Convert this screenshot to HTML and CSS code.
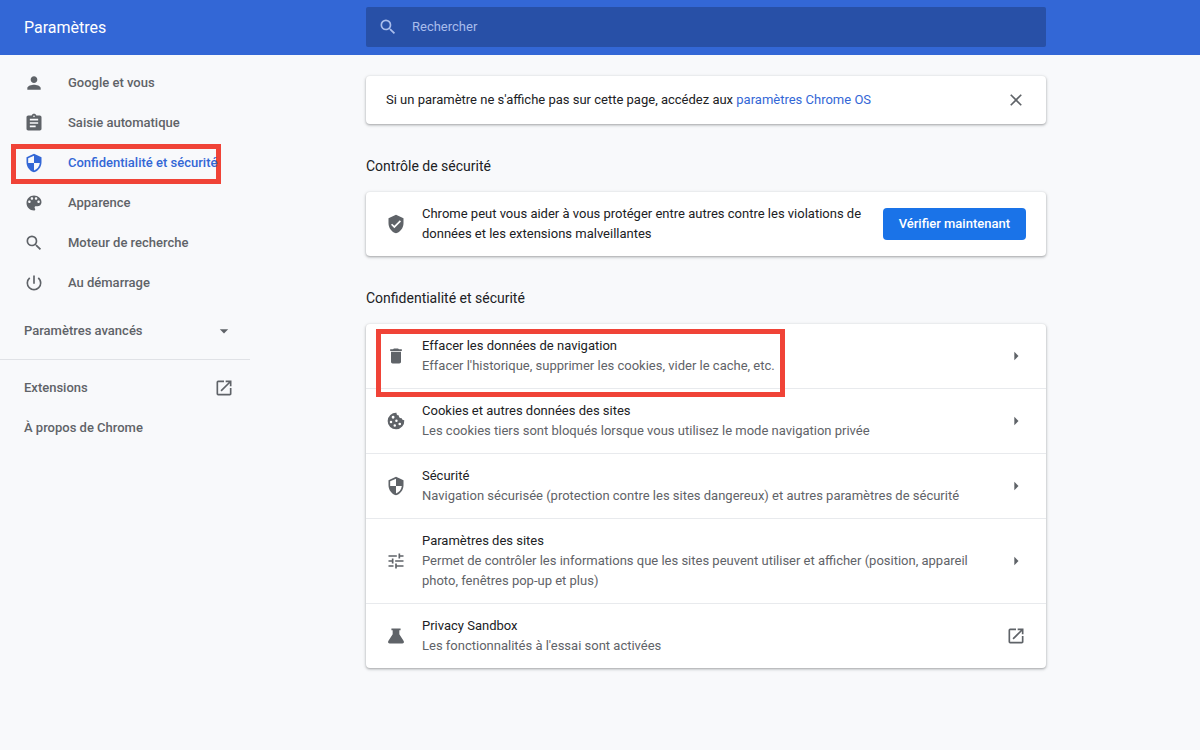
FILE: index.html
```html
<!DOCTYPE html>
<html lang="fr">
<head>
<meta charset="utf-8">
<meta name="viewport" content="width=device-width, initial-scale=1">
<title>Paramètres</title>
<link rel="stylesheet" href="styles.css">
</head>
<body>
<svg class="sprite" aria-hidden="true">
  <symbol id="search" viewBox="0 0 24 24"><path d="M15.5 14h-.79l-.28-.27A6.471 6.471 0 0 0 16 9.500 6.500 6.500 0 1 0 9.500 16c1.610 0 3.090-.59 4.230-1.570l.27.28v.79l5 4.990L20.490 19l-4.990-5zm-6 0C7.010 14 5 11.990 5 9.500S7.010 5 9.500 5 14 7.010 14 9.500 11.990 14 9.500 14z"/></symbol>
  <symbol id="person" viewBox="0 0 24 24"><path d="M12 12c2.210 0 4-1.790 4-4s-1.790-4-4-4-4 1.790-4 4 1.790 4 4 4zm0 2c-2.670 0-8 1.340-8 4v2h16v-2c0-2.660-5.330-4-8-4z"/></symbol>
  <symbol id="clipboard" viewBox="0 0 24 24"><path d="M19 3h-4.180C14.400 1.840 13.300 1 12 1s-2.400.84-2.820 2H5c-1.100 0-2 .9-2 2v14c0 1.100.9 2 2 2h14c1.100 0 2-.9 2-2V5c0-1.100-.9-2-2-2zm-7 0c.55 0 1 .45 1 1s-.45 1-1 1-1-.45-1-1 .45-1 1-1zm2 14H7v-2h7v2zm3-4H7v-2h10v2zm0-4H7V7h10v2z"/></symbol>
  <symbol id="shield" viewBox="0 0 24 24"><path d="M12 1L3 5v6c0 5.550 3.840 10.740 9 12 5.160-1.260 9-6.450 9-12V5l-9-4zm0 10.990h7c-.53 4.120-3.280 7.790-7 8.940V12H5V6.300l7-3.110v8.800z"/></symbol>
  <symbol id="shield-check" viewBox="0 0 24 24"><path d="M12 1L3 5v6c0 5.550 3.840 10.740 9 12 5.160-1.260 9-6.450 9-12V5l-9-4zm-2 16l-4-4 1.410-1.410L10 14.170l6.590-6.590L18 9l-8 8z"/></symbol>
  <symbol id="palette" viewBox="0 0 24 24"><path d="M12 3c-4.970 0-9 4.030-9 9s4.030 9 9 9c.83 0 1.500-.67 1.500-1.500 0-.39-.15-.74-.39-1.010-.23-.26-.38-.61-.38-.99 0-.83.67-1.500 1.500-1.500H16c2.760 0 5-2.240 5-5 0-4.420-4.030-8-9-8zm-5.500 9c-.83 0-1.500-.67-1.500-1.500S5.670 9 6.500 9 8 9.670 8 10.500 7.330 12 6.500 12zm3-4C8.670 8 8 7.330 8 6.500S8.670 5 9.500 5s1.500.67 1.500 1.500S10.330 8 9.500 8zm5 0c-.83 0-1.500-.67-1.500-1.500S13.670 5 14.500 5s1.500.67 1.500 1.500S15.330 8 14.500 8zm3 4c-.83 0-1.500-.67-1.500-1.500S16.670 9 17.500 9s1.500.67 1.500 1.500-.67 1.500-1.500 1.500z"/></symbol>
  <symbol id="power" viewBox="0 0 24 24"><path d="M13 3h-2v10h2V3zm4.830 2.170l-1.420 1.420A6.920 6.920 0 0 1 19 12c0 3.870-3.130 7-7 7s-7-3.130-7-7c0-2.190 1.010-4.140 2.580-5.420L6.170 5.170A8.932 8.932 0 0 0 3 12a9 9 0 0 0 18 0c0-2.740-1.230-5.180-3.170-6.830z"/></symbol>
  <symbol id="open" viewBox="0 0 24 24"><path d="M19 19H5V5h7V3H5a2 2 0 0 0-2 2v14a2 2 0 0 0 2 2h14c1.100 0 2-.9 2-2v-7h-2v7zM14 3v2h3.590l-9.830 9.830 1.410 1.410L19 6.410V10h2V3h-7z"/></symbol>
  <symbol id="down" viewBox="0 0 24 24"><path d="M7 10l5 5 5-5z"/></symbol>
  <symbol id="right" viewBox="0 0 24 24"><path d="M10 7l5 5-5 5z"/></symbol>
  <symbol id="close" viewBox="0 0 24 24"><path d="M19 6.410L17.590 5 12 10.590 6.410 5 5 6.410 10.590 12 5 17.590 6.410 19 12 13.410 17.590 19 19 17.590 13.410 12z"/></symbol>
  <symbol id="trash" viewBox="0 0 24 24"><path d="M6 19c0 1.100.9 2 2 2h8c1.100 0 2-.9 2-2V7H6v12zM19 4h-3.500l-1-1h-5l-1 1H5v2h14V4z"/></symbol>
  <symbol id="cookie" viewBox="0 0 24 24"><path fill-rule="evenodd" d="M21.950 11.200c-1.600.1-2.900-.9-3-2.400-2.200.3-3.900-1.300-3.500-3.300-2-.1-3.200-1.600-2.800-3.450A10 10 0 1 0 21.950 11.200zM8.500 5.800a1.700 1.700 0 1 1 0 3.400 1.700 1.700 0 0 1 0-3.400zM6 11.600a1.500 1.500 0 1 1 0 3 1.500 1.500 0 0 1 0-3zM12.500 10.300a1.500 1.500 0 1 1 0 3 1.500 1.500 0 0 1 0-3zM10.500 16a1.500 1.500 0 1 1 0 3 1.500 1.500 0 0 1 0-3zM16.500 14a1.600 1.600 0 1 1 0 3.200 1.600 1.600 0 0 1 0-3.200z"/></symbol>
  <symbol id="tune" viewBox="0 0 24 24"><path d="M3 17v2h6v-2H3zM3 5v2h10V5H3zm10 16v-2h8v-2h-8v-2h-2v6h2zM7 9v2H3v2h4v2h2V9H7zm14 4v-2H11v2h10zm-6-4h2V7h4V5h-4V3h-2v6z"/></symbol>
  <symbol id="flask" viewBox="0 0 24 24"><path d="M6.500 3h11v2H16v5l5.200 8c.9 1.400 0 3-1.700 3h-15c-1.700 0-2.600-1.600-1.700-3L8 10V5H6.500z"/></symbol>
</svg>

<header class="toolbar">
  <h1 class="toolbar-title">Paramètres</h1>
  <label class="search">
    <svg class="icon"><use href="#search"/></svg>
    <input class="search-input" type="search" placeholder="Rechercher" aria-label="Rechercher">
  </label>
</header>

<div class="layout">
  <nav class="sidebar">
    <a class="nav-item" href="#"><svg class="icon"><use href="#person"/></svg>Google et vous</a>
    <a class="nav-item" href="#"><svg class="icon"><use href="#clipboard"/></svg>Saisie automatique</a>
    <a class="nav-item selected" href="#"><span class="highlight highlight-nav"></span><svg class="icon"><use href="#shield"/></svg><span class="nav-label">Confidentialité et sécurité</span></a>
    <a class="nav-item" href="#"><svg class="icon"><use href="#palette"/></svg>Apparence</a>
    <a class="nav-item" href="#"><svg class="icon"><use href="#search"/></svg>Moteur de recherche</a>
    <a class="nav-item" href="#"><svg class="icon"><use href="#power"/></svg>Au démarrage</a>
    <button class="nav-item nav-advanced" type="button">Paramètres avancés<svg class="icon"><use href="#down"/></svg></button>
    <hr class="separator">
    <a class="nav-item nav-split" href="#">Extensions<svg class="icon"><use href="#open"/></svg></a>
    <a class="nav-item" href="#">À propos de Chrome</a>
  </nav>

  <main class="content">
    <div class="card notice">
      <p class="notice-text">Si un paramètre ne s'affiche pas sur cette page, accédez aux <a class="link" href="#">paramètres Chrome OS</a></p>
      <button class="icon-button" type="button" aria-label="Fermer"><svg class="icon"><use href="#close"/></svg></button>
    </div>

    <h2 class="section-title">Contrôle de sécurité</h2>
    <div class="card row">
      <svg class="icon"><use href="#shield-check"/></svg>
      <p class="row-text">Chrome peut vous aider à vous protéger entre autres contre les violations de données et les extensions malveillantes</p>
      <button class="action" type="button">Vérifier maintenant</button>
    </div>

    <h2 class="section-title">Confidentialité et sécurité</h2>
    <div class="card">
      <a class="row" href="#">
        <svg class="icon"><use href="#trash"/></svg>
        <span class="row-text">Effacer les données de navigation<span class="secondary">Effacer l'historique, supprimer les cookies, vider le cache, etc.</span></span>
        <svg class="icon"><use href="#right"/></svg>
        <span class="highlight highlight-row"></span>
      </a>
      <a class="row" href="#">
        <svg class="icon"><use href="#cookie"/></svg>
        <span class="row-text">Cookies et autres données des sites<span class="secondary">Les cookies tiers sont bloqués lorsque vous utilisez le mode navigation privée</span></span>
        <svg class="icon"><use href="#right"/></svg>
      </a>
      <a class="row" href="#">
        <svg class="icon"><use href="#shield"/></svg>
        <span class="row-text">Sécurité<span class="secondary">Navigation sécurisée (protection contre les sites dangereux) et autres paramètres de sécurité</span></span>
        <svg class="icon"><use href="#right"/></svg>
      </a>
      <a class="row" href="#">
        <svg class="icon"><use href="#tune"/></svg>
        <span class="row-text">Paramètres des sites<span class="secondary">Permet de contrôler les informations que les sites peuvent utiliser et afficher (position, appareil photo, fenêtres pop-up et plus)</span></span>
        <svg class="icon"><use href="#right"/></svg>
      </a>
      <a class="row" href="#">
        <svg class="icon"><use href="#flask"/></svg>
        <span class="row-text">Privacy Sandbox<span class="secondary">Les fonctionnalités à l'essai sont activées</span></span>
        <svg class="icon"><use href="#open"/></svg>
      </a>
    </div>
  </main>
</div>
</body>
</html>
```
FILE: styles.css
```css
* { box-sizing: border-box; }

body {
  margin: 0;
  min-height: 100vh;
  background: #f8f9fb;
  color: #202124;
  font: 13px/20px Roboto, "Liberation Sans", sans-serif;
}

h1, h2, p { margin: 0; }
a { color: inherit; text-decoration: none; }
button, input { font: inherit; }

.sprite { position: absolute; width: 0; height: 0; }

.icon {
  display: block;
  flex: none;
  width: 20px;
  height: 20px;
  fill: #5f6368;
}

.toolbar,
.layout {
  display: grid;
  grid-template-columns: 366px minmax(0, 680px) 1fr;
}

.toolbar {
  align-items: center;
  padding: 7px 0 8px;
  background: #3367d6;
  color: #fff;
}

.toolbar-title {
  padding: 2px 0 0 24px;
  font-size: 16px;
  font-weight: 400;
}

.search {
  display: flex;
  align-items: center;
  gap: 14px;
  height: 40px;
  padding: 0 12px;
  border-radius: 2px;
  background: #2850a7;
}

.search .icon { fill: #a9bdec; }

.search-input {
  flex: 1;
  min-width: 0;
  padding: 0;
  border: 0;
  outline: 0;
  background: none;
  color: #fff;
}

.search-input::placeholder { color: #a9bdec; opacity: 1; }

.sidebar {
  width: 250px;
  padding-top: 8px;
}

.nav-item {
  position: relative;
  display: flex;
  align-items: center;
  gap: 24px;
  width: 100%;
  height: 40px;
  padding: 0 16px 0 24px;
  border: 0;
  background: none;
  color: #5f6368;
  font-weight: 500;
  white-space: nowrap;
}

.nav-label { position: relative; }

.nav-advanced,
.nav-split { justify-content: space-between; }

.nav-advanced { margin-top: 8px; }

.selected,
.link { color: #3367d6; }

.selected .icon { fill: #3367d6; }

.separator {
  margin: 8px 0;
  border: 0;
  border-top: 1px solid #e0e2e6;
}

.highlight {
  position: absolute;
  border: 5px solid #f04337;
  pointer-events: none;
}

.highlight-nav { inset: 1px 29px -1px 11px; }

.highlight-row {
  top: 5px;
  left: 10px;
  width: 409px;
  height: 68px;
  z-index: 1;
}

.content { padding: 21px 0 24px; }

.card {
  border-radius: 4px;
  background: #fff;
  box-shadow: 0 1px 2px rgba(60, 64, 67, .3), 0 1px 3px 1px rgba(60, 64, 67, .15);
}

.notice {
  display: flex;
  align-items: center;
  justify-content: space-between;
  padding: 14px 20px;
}

.icon-button {
  padding: 0;
  border: 0;
  background: none;
}

.section-title {
  padding: 32px 0 16px;
  font-size: 14px;
  font-weight: 400;
}

.row {
  position: relative;
  display: flex;
  align-items: center;
  gap: 16px;
  padding: 12px 20px;
}

.row + .row { border-top: 1px solid #e8eaed; }

.row-text { flex: 1; padding-right: 4px; }

.secondary { display: block; color: #5f6368; }

.action {
  height: 32px;
  padding: 0 16px;
  border: 0;
  border-radius: 4px;
  background: #1a73e8;
  color: #fff;
  font-weight: 500;
}
```
